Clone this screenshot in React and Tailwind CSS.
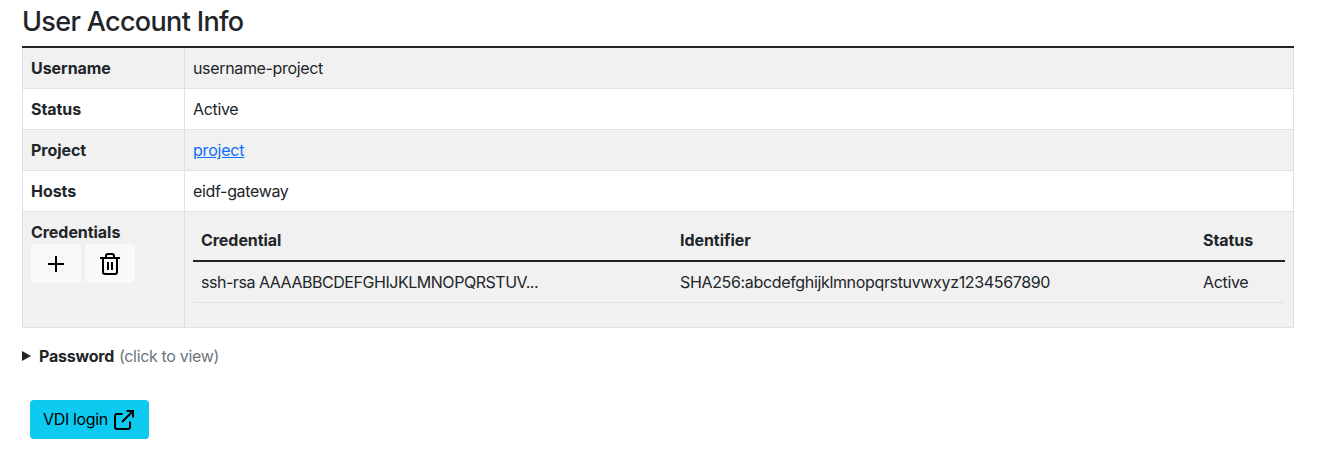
import React from "react";

const rows = [
  ["Username", "username-project"],
  ["Status", "Active"],
  ["Project", <a href="#" className="tracking-[-0.2px] text-[#0d6efd] underline">project</a>],
  ["Hosts", "eidf-gateway"],
];

function PlusIcon() {
  return (
    <svg width="24" height="24" viewBox="0 0 24 24" fill="none" stroke="currentColor" strokeWidth="2">
      <path d="M12 4v16M4 12h16" />
    </svg>
  );
}

function TrashIcon() {
  return (
    <svg width="24" height="24" viewBox="0 0 24 24" fill="none" stroke="currentColor" strokeWidth="2">
      <path d="M2 6h20M5 6v14a2 2 0 0 0 2 2h10a2 2 0 0 0 2-2V6M8 6V4a2 2 0 0 1 2-2h4a2 2 0 0 1 2 2v2M10 10v8M14 10v8" />
    </svg>
  );
}

function ExternalIcon() {
  return (
    <svg width="24" height="24" viewBox="0 0 24 24" fill="none" stroke="currentColor" strokeWidth="2">
      <path d="M10.5 6H5a2 2 0 0 0-2 2v11a2 2 0 0 0 2 2h11a2 2 0 0 0 2-2v-5.5M10 14L21 3M14.5 3H21v6.5" />
    </svg>
  );
}

export default function App() {
  return (
    <main className="h-[455px] bg-white pl-[22px] pr-[26px] font-['Inter',sans-serif] text-base leading-6 tracking-[-0.34px] text-[#212529]">
      <h1 className="h-[46px] pt-[5px] text-[27px] font-medium leading-[34px] tracking-[-0.66px]">User Account Info</h1>
      <div className="border-t-2 border-[#212529]">
        <div className="border-x border-[#dee2e6]">
          {rows.map(([label, value]) => (
            <div key={label} className="flex h-[41px] border-b border-[#dee2e6] odd:bg-[#f1f1f1]">
              <div className="w-[162px] border-r border-[#dee2e6] p-2 font-bold tracking-[-0.05px]">{label}</div>
              <div className="p-2">{value}</div>
            </div>
          ))}
          <div className="flex h-[116px] border-b border-[#dee2e6] bg-[#f1f1f1]">
            <div className="w-[162px] shrink-0 border-r border-[#dee2e6] px-2 pt-2">
              <div className="font-bold tracking-[-0.05px]">Credentials</div>
              <div className="flex gap-1 text-black">
                <button aria-label="Add" className="flex h-[39px] w-[50px] justify-center rounded bg-[#f8f9fa] pt-2"><PlusIcon /></button>
                <button aria-label="Delete" className="flex h-[39px] w-[50px] justify-center rounded bg-[#f8f9fa] pt-2"><TrashIcon /></button>
              </div>
            </div>
            <div className="flex-1 p-2">
              <div className="flex h-[42px] border-b-2 border-[#212529] p-2 font-bold tracking-[-0.05px]">
                <div className="w-[479px]">Credential</div>
                <div className="w-[523px]">Identifier</div>
                <div>Status</div>
              </div>
              <div className="flex h-[41px] border-b border-[#dee2e6] px-2 pt-2">
                <div className="w-[479px] tracking-[-0.46px]">ssh-rsa AAAABBCDEFGHIJKLMNOPQRSTUV...</div>
                <div className="w-[523px]">SHA256:abcdefghijklmnopqrstuvwxyz1234567890</div>
                <div>Active</div>
              </div>
            </div>
          </div>
        </div>
      </div>
      <div className="mt-4 flex h-6 items-center">
        <svg width="9" height="10" viewBox="0 0 9 10" className="mr-2"><path d="M0 0L9 5L0 10Z" fill="currentColor" /></svg>
        <span className="w-[75px] font-bold tracking-[-0.2px]">Password</span>
        <span className="ml-[5px]  text-[#6c757d]">(click to view)</span>
      </div>
      <button className="ml-2 mt-8 flex h-[39px] w-[119px] items-start rounded bg-[#0dcaf0] pl-[13px] text-black">
        <span className="w-[69px] pt-[7px] text-left">VDI login</span>
        <span className="pt-2"><ExternalIcon /></span>
      </button>
    </main>
  );
}
